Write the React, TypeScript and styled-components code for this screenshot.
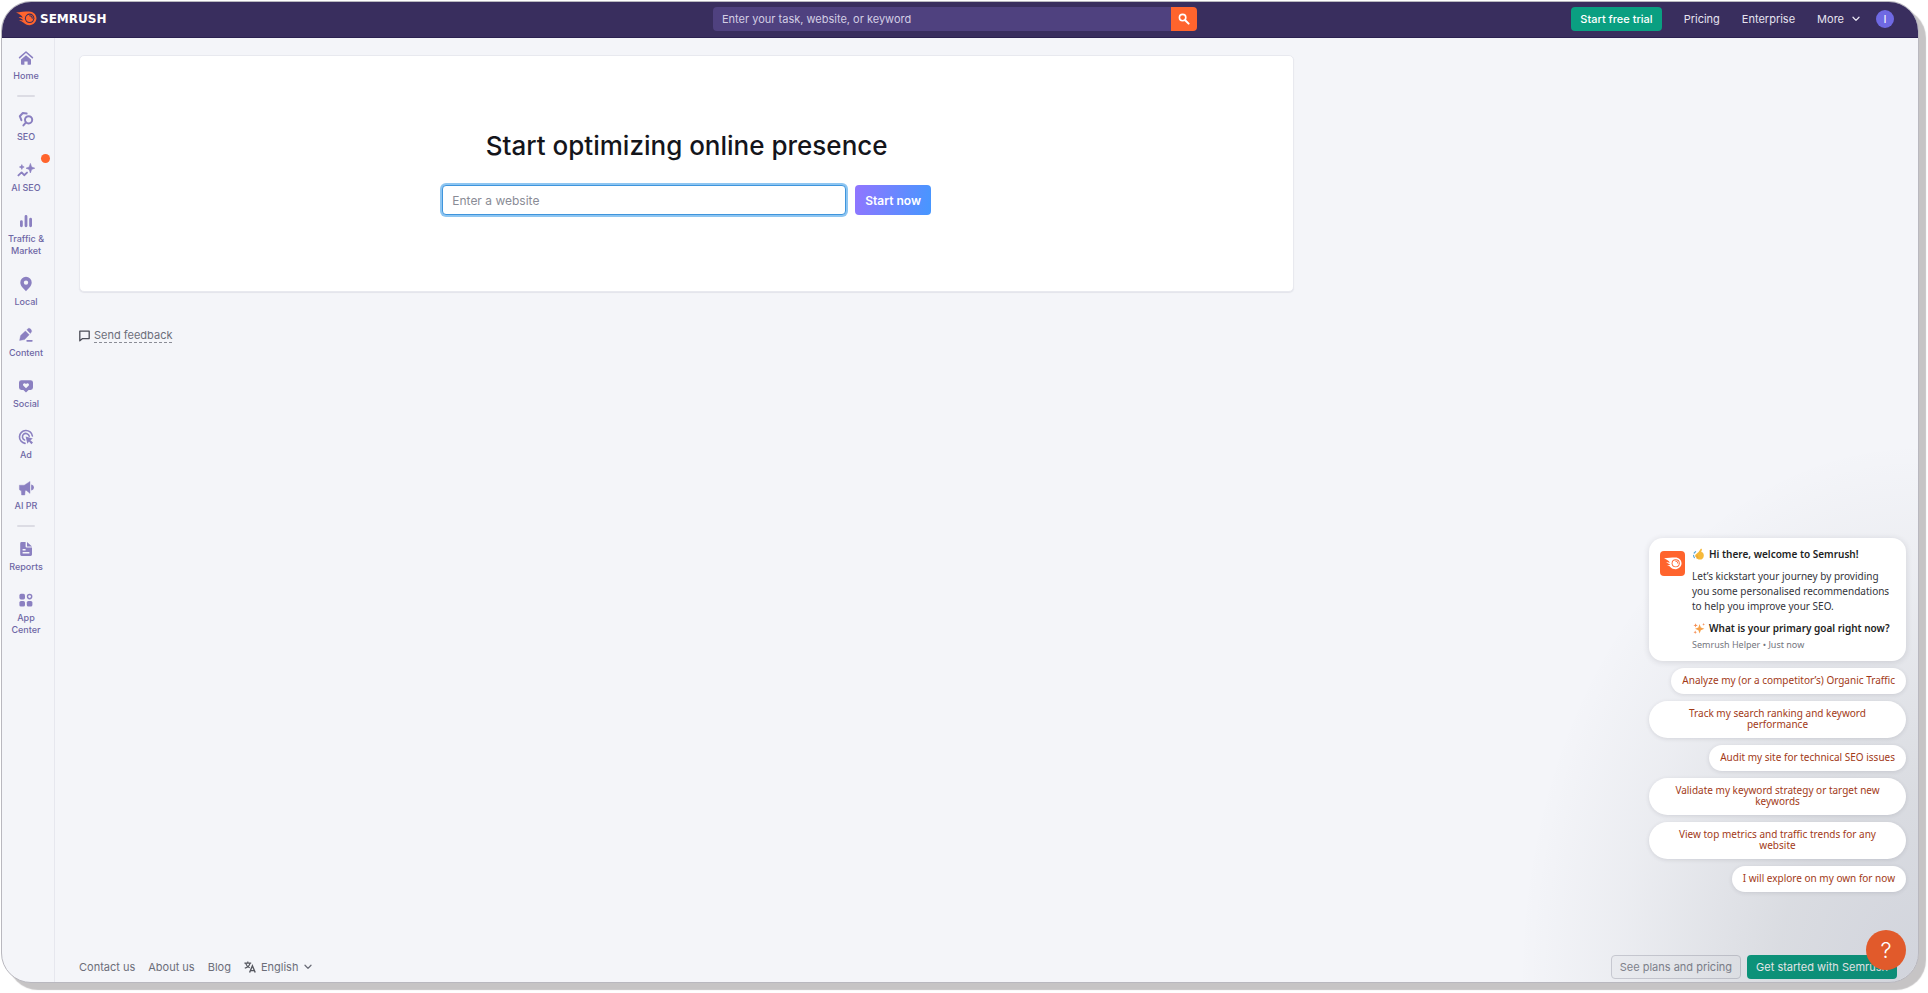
import React from 'react';
import styled, { createGlobalStyle } from 'styled-components';

const GlobalStyle = createGlobalStyle`
  * { box-sizing: border-box; }
  body {
    margin: 0;
    background: #fff;
    font-family: Inter, 'Liberation Sans', sans-serif;
    font-size: 11px;
    color: #6c6e79;
  }
  button, input, select { font: inherit; color: inherit; }
  button { cursor: pointer; }
  a { color: inherit; text-decoration: none; }
`;

const Page = styled.div`
  min-height: 100vh;
  padding: 1px 9px 10px 1px;
  display: flex;
`;

const AppWindow = styled.div`
  position: relative;
  flex: 1;
  display: flex;
  flex-direction: column;
  border: 1px solid #b9b8bf;
  border-radius: 30px;
  background: #f4f5f9;
  box-shadow: 7px 7px 1px #c6c4c5;
  overflow: hidden;
`;

/* ---------- header ---------- */

const Header = styled.header`
  height: 36px;
  flex: none;
  display: grid;
  grid-template-columns: 1fr 484px 1fr;
  align-items: center;
  padding: 0 24px 2px 14px;
  background: #392e5e;
  border-bottom: 1px solid #2b2150;
  color: #e6e3f0;
`;

const Brand = styled.a`
  display: flex;
  align-items: center;
  gap: 3px;
  color: #fff;
  font-family: 'DejaVu Sans', sans-serif;
  font-weight: 700;
  font-size: 12px;
  line-height: 16px;
`;

const SearchForm = styled.form`
  display: flex;
  height: 24px;
  border-radius: 4px;
  overflow: hidden;
`;

const SearchInput = styled.input`
  flex: 1;
  min-width: 0;
  border: 0;
  outline: 0;
  padding: 0 9px;
  background: #4f417f;
  &::placeholder { color: #d3cee4; opacity: 1; }
`;

const SearchButton = styled.button`
  width: 26px;
  border: 0;
  padding: 0;
  display: flex;
  align-items: center;
  justify-content: center;
  background: #ff642d;
`;

const HeaderNav = styled.nav`
  display: flex;
  align-items: center;
  justify-content: flex-end;
  gap: 22px;
`;

const MoreButton = styled.button`
  display: flex;
  align-items: center;
  gap: 8px;
  border: 0;
  padding: 0;
  background: none;
`;

const Avatar = styled.button`
  width: 18px;
  height: 18px;
  margin-left: -6px;
  border: 0;
  padding: 0;
  border-radius: 50%;
  background: #6f69e3;
  color: #fff;
  line-height: 18px;
`;

const Button = styled.button<{ $tone: 'green' | 'gray'; $weight?: number }>`
  height: 24px;
  padding: 0 8px;
  border: 1px solid ${p => (p.$tone === 'gray' ? '#cdced6' : 'transparent')};
  border-radius: 4px;
  background: ${p => ({ green: '#0a9f81', gray: '#f1f2f6' })[p.$tone]};
  background-clip: border-box;
  color: ${p => (p.$tone === 'gray' ? '#83858f' : '#fff')};
  font-weight: ${p => p.$weight ?? 400};
  line-height: 16px;
  white-space: nowrap;
`;

/* ---------- body ---------- */

const Body = styled.div`
  flex: 1;
  display: flex;
`;

const Sidebar = styled.nav`
  width: 53px;
  flex: none;
  border-right: 1px solid #e6e7ee;
  padding: 2px 4px 0 0;
  display: flex;
  flex-direction: column;
  align-items: center;
`;

const SideItem = styled.a`
  position: relative;
  width: 100%;
  padding: 10px 0 9px;
  display: flex;
  flex-direction: column;
  align-items: center;
  gap: 4px;
  text-align: center;
  color: #6e67a5;
  font-size: 9px;
  font-weight: 500;
  line-height: 12px;
  white-space: pre-line;
  svg { color: #8b80c1; display: block; }
`;

const Divider = styled.hr`
  width: 18px;
  height: 2px;
  margin: 4px 0;
  border: 0;
  border-radius: 1px;
  background: #dcdce4;
`;

const NewDot = styled.span`
  position: absolute;
  top: 2px;
  right: 0;
  width: 9px;
  height: 9px;
  border-radius: 50%;
  background: #ff642d;
`;

const Main = styled.main`
  flex: 1;
  min-width: 0;
  display: flex;
  flex-direction: column;
  justify-content: space-between;
  padding: 17px 16px 3px 24px;
`;

const Content = styled.div`
  display: grid;
  grid-template-columns: 2fr 1fr;
`;

const Card = styled.section`
  height: 237px;
  display: flex;
  flex-direction: column;
  align-items: center;
  padding-top: 72px;
  border: 1px solid #e8e9ef;
  border-radius: 5px;
  background: #fff;
  box-shadow: 0 1px 1px #e3e4ea;
`;

const Title = styled.h1`
  margin: 0 0 21px;
  font-size: 26px;
  line-height: 36px;
  font-weight: 500;
  color: #14151b;
`;

const SiteForm = styled.form`
  display: flex;
  gap: 9px;
`;

const SiteInput = styled.input`
  width: 404px;
  height: 30px;
  padding: 0 9px;
  border: 1px solid #3f95dc;
  border-radius: 4px;
  outline: 0;
  background: #fff;
  box-shadow: 0 0 0 2px #8ec6f2;
  font-size: 12px;
  &::placeholder { color: #8a8c96; opacity: 1; }
`;

const StartButton = styled.button`
  height: 30px;
  padding: 0 10px;
  border: 0;
  border-radius: 4px;
  background: linear-gradient(100deg, #9175ff, #4697ff);
  color: #fff;
  font-size: 12px;
  font-weight: 600;
`;

const Feedback = styled.a`
  display: inline-flex;
  align-items: center;
  gap: 4px;
  margin-top: 36px;
  span { border-bottom: 1px dashed #8a8c96; line-height: 14px; }
`;

const Footer = styled.footer`
  display: flex;
  align-items: center;
  justify-content: space-between;
  padding-right: 5px;
`;

const FooterGroup = styled.div<{ $gap: number }>`
  display: flex;
  align-items: center;
  gap: ${p => p.$gap}px;
`;

const Language = styled.label`
  display: flex;
  align-items: center;
  gap: 5px;
  select {
    appearance: none;
    border: 0;
    outline: 0;
    padding: 0;
    background: none;
    width: 38px;
  }
`;

/* ---------- assistant ---------- */

const Haze = styled.div`
  position: absolute;
  right: 0;
  bottom: 0;
  width: 400px;
  height: 540px;
  pointer-events: none;
  background: radial-gradient(farthest-side at bottom right, rgba(29, 39, 70, 0.16) 0%, rgba(29, 39, 54, 0.12) 35%, rgba(29, 39, 54, 0.04) 75%, rgba(29, 39, 54, 0) 100%);
`;

const Assistant = styled.aside`
  position: absolute;
  right: 12px;
  bottom: 90px;
  width: 257px;
  display: flex;
  flex-direction: column;
  align-items: flex-end;
  gap: 7px;
  font-family: 'Noto Sans', 'Open Sans', sans-serif;
  font-size: 10px;
`;

const Message = styled.article`
  width: 100%;
  display: flex;
  gap: 7px;
  padding: 9px 8px 9px 11px;
  border-radius: 14px;
  background: #fff;
  box-shadow: 0 1px 6px rgba(40, 44, 60, 0.14);
  color: #33343a;
  line-height: 15px;
`;

const HelperIcon = styled.span`
  flex: none;
  width: 25px;
  height: 25px;
  margin-top: 4px;
  border-radius: 4px;
  background: #ff642d;
  display: flex;
  align-items: center;
  justify-content: center;
`;

const MessageBody = styled.div`
  white-space: nowrap;
  p { margin: 0 0 7px; }
  small { display: block; font-size: 9px; line-height: 14px; color: #74767e; }
`;

const Strong = styled.p`
  && { display: flex; align-items: center; gap: 3px; font-weight: 600; color: #1d1e23; }
  &&:nth-of-type(3) { margin-bottom: 2px; }
`;

const Choice = styled.button`
  max-width: 100%;
  padding: 7px 11px 8px;
  border: 0;
  border-radius: 19px;
  background: #fff;
  box-shadow: 0 1px 4px rgba(40, 44, 60, 0.12);
  color: #a23a17;
  line-height: 11px;
  text-align: center;
`;

const HelpButton = styled.button`
  position: absolute;
  right: 12px;
  bottom: 12px;
  width: 40px;
  height: 40px;
  border: 0;
  padding: 0;
  border-radius: 50%;
  background: #e15a2b;
  color: #fff;
  font-size: 22px;
  font-weight: 300;
  line-height: 40px;
`;

/* ---------- drawings ---------- */

const Comet = ({ size, flame, hole }: { size: number; flame: string; hole: string }) => (
  <svg width={size} height={size * 0.7} viewBox="0 0 40 28" aria-hidden="true">
    <path fill={flame} d="M0 3C8 2 17 1 25 1c8 0 14 6 14 13s-6 13-13 13c-5 0-9-2-12-5-2-2-5-3-8-4 3-1 6 0 8 0-2-3-5-4-9-6 3-1 5 0 8 1C11 8 6 6 0 3z" />
    <circle cx="26" cy="14" r="9" fill={hole} />
    <circle cx="26" cy="14" r="7" fill={flame} />
    <path d="M26 9a5 5 0 0 1 5 5" fill="none" stroke={hole} strokeWidth="2" strokeLinecap="round" />
  </svg>
);

const Chevron = () => (
  <svg width="8" height="6" viewBox="0 0 8 6" fill="none" stroke="currentColor" strokeWidth="1.3" strokeLinecap="round" strokeLinejoin="round" aria-hidden="true">
    <path d="M1 1.2 4 4.4 7 1.2" />
  </svg>
);

const icons: Record<string, React.ReactNode> = {
  home: <><path d="M1.6 7.6 8 2l6.4 5.6" fill="none" stroke="currentColor" strokeWidth="1.6" strokeLinecap="round" strokeLinejoin="round" /><path d="M8 5.2 3 9.6V14a.8.8 0 0 0 .8.8h2.6v-3.4h3.2v3.4h2.6A.8.8 0 0 0 13 14V9.6z" fill="currentColor" /></>,
  seo: <g fill="none" stroke="currentColor" strokeWidth="2"><circle cx="10.6" cy="8.8" r="3.6" /><path d="m8 11.4-2.6 3" strokeLinecap="round" /><path d="M8.6 2.6 4.8 2 1.8 5.2l1.6 4" strokeLinejoin="round" strokeLinecap="round" /></g>,
  ai: <><path d="M12.4 1.4 13.6 5l3.2 1.2-3.2 1.2-1.2 3.6-1.2-3.6L8 6.2 11.2 5zM3.8 2.6l.7 1.7 1.7.7-1.7.7-.7 1.7-.7-1.7L1.4 5l1.7-.7z" fill="currentColor" stroke="currentColor" strokeWidth=".6" /><path d="m.4 13.4 3.2-3 2.6 2.8 2.8-2.6" fill="none" stroke="currentColor" strokeWidth="1.9" strokeLinecap="round" strokeLinejoin="round" /></>,
  traffic: <g stroke="currentColor" strokeWidth="2.8" strokeLinecap="round"><path d="M3.4 8.6v4.2M8 3.4v9.4M12.6 6.2v6.6" /></g>,
  local: <path fillRule="evenodd" fill="currentColor" d="M8 .8a5.700 5.700 0 0 0-5.700 5.700c0 3.800 3.400 6.200 5.700 8.700 2.300-2.500 5.700-4.900 5.700-8.700A5.700 5.700 0 0 0 8 .8zM8 4.400a2.200 2.200 0 1 1 0 4.400 2.200 2.200 0 0 1 0-4.400z" />,
  content: <><path d="M1.600 13.400 2.600 8.600 7.400 4l3.800 3.800-4.600 4.800zM8.800 2.800 10.400 1.400c1.400-.6 3.600 1.600 3.200 3.200L12.400 6.400z" fill="currentColor" stroke="currentColor" strokeWidth=".4" /><path d="M9.200 13.800h4.600" stroke="currentColor" strokeWidth="1.8" strokeLinecap="round" /></>,
  social: <><path d="M3.400 2.200h9.200A2.400 2.400 0 0 1 15 4.600v5a2.400 2.400 0 0 1-2.400 2.400h-2L8 14.600 5.400 12h-2A2.400 2.400 0 0 1 1 9.600v-5a2.400 2.400 0 0 1 2.400-2.400z" fill="currentColor" /><path d="M8 10.200 5.200 7.400c-.9-1.300 1.200-3.400 2.800-1.500 1.600-1.900 3.700.2 2.800 1.500z" fill="#f4f5f9" /></>,
  ad: <><g fill="none" stroke="currentColor" strokeWidth="1.600" strokeLinecap="round"><path d="M14.400 7A6.500 6.500 0 1 0 7 14.400" /><path d="M11.200 7.200A3.400 3.400 0 1 0 6.600 11" /></g><path d="m7.600 7.600 7.200 2-2.400 1.600 2.600 2.400-1.600 1.600-2.400-2.600-1.600 2.200z" fill="currentColor" /></>,
  pr: <><path d="M1.400 5.200h4.800L12 1.400v12l-3.600-3H7.200L6.800 15H3.600l-.4-4.600H2.600A1.300 1.300 0 0 1 1.400 9z" fill="currentColor" strokeLinejoin="round" stroke="currentColor" strokeWidth=".4" /><path d="M13.800 5.400a2.200 2.200 0 0 1 0 4.200z" fill="currentColor" stroke="currentColor" strokeWidth="1.200" /></>,
  reports: <path fillRule="evenodd" fill="currentColor" d="M3.600 1h4v4.600a1 1 0 0 0 1 1H14v7A1.400 1.400 0 0 1 12.600 15H3.600A1.400 1.400 0 0 1 2.200 13.600V2.400A1.400 1.400 0 0 1 3.600 1zM9 1l5 4.600H9zM4.600 8v1.400h3V8zM4.600 11v1.400h6.800V11z" />,
  apps: <><g fill="currentColor"><rect x="1.400" y="1.800" width="5.600" height="5.600" rx="1.600" /><rect x="1.400" y="9" width="5.600" height="5.600" rx="1.600" /><rect x="8.800" y="9" width="5.600" height="5.600" rx="1.600" /></g><circle cx="11.600" cy="4.600" r="2.100" fill="none" stroke="currentColor" strokeWidth="1.400" /></>,
};

const SideIcon = ({ name }: { name: string }) => (
  <svg width="16" height="16" viewBox="0 0 16 16" overflow="visible" aria-hidden="true">{icons[name]}</svg>
);

const Wave = () => (
  <svg width="14" height="13" viewBox="0 0 14 13" aria-hidden="true">
    <path d="M3.400 6.800 6.600 4 8.800.8c.8-.4 1.300.2 1.100 1L9.200 4c1.600.2 2.600 1.500 2.600 3.400 0 2.600-1.600 4.200-4 4.200-1.600 0-2.900-.6-3.700-1.800l.5-.8L3 8.200z" fill="#f6b93a" />
    <path d="M3.600 8.400 6 8M4.400 10l2-.6" stroke="#e0952a" strokeWidth=".6" />
    <path d="M3.600 3.600 2.200 5M1.600 7.400c0 1 .3 1.600.8 2.200" stroke="#59a7d8" strokeWidth="1.200" fill="none" strokeLinecap="round" />
  </svg>
);

const Sparkles = () => (
  <svg width="14" height="13" viewBox="0 0 14 13" aria-hidden="true">
    <path d="M7.600 2 8.800 5.400 12.400 6.800 8.800 8.200 7.600 11.600 6.400 8.200 3 6.800 6.400 5.400z" fill="#f7a24b" />
    <path d="m3.600 1.200.6 1.600 1.600.6-1.600.6-.6 1.600L3 4l-1.600-.6L3 2.800zM3.200 8.600l.5 1.200 1.200.5-1.200.5-.5 1.200-.5-1.200-1.200-.5 1.200-.5zM11.600 1l.4 1 1 .4-1 .4-.4 1-.4-1-1-.4 1-.4z" fill="#f58f56" />
  </svg>
);

/* ---------- data ---------- */

const sections = [
  [{ icon: 'home', label: 'Home' }],
  [
    { icon: 'seo', label: 'SEO' },
    { icon: 'ai', label: 'AI SEO', isNew: true },
    { icon: 'traffic', label: 'Traffic &\nMarket' },
    { icon: 'local', label: 'Local' },
    { icon: 'content', label: 'Content' },
    { icon: 'social', label: 'Social' },
    { icon: 'ad', label: 'Ad' },
    { icon: 'pr', label: 'AI PR' },
  ],
  [
    { icon: 'reports', label: 'Reports' },
    { icon: 'apps', label: 'App\nCenter' },
  ],
] as { icon: string; label: string; isNew?: boolean }[][];

const choices = [
  'Analyze my (or a competitor’s) Organic Traffic',
  'Track my search ranking and keyword performance',
  'Audit my site for technical SEO issues',
  'Validate my keyword strategy or target new keywords',
  'View top metrics and traffic trends for any website',
  'I will explore on my own for now',
];

export default function App() {
  return (
    <Page>
      <GlobalStyle />
      <AppWindow>
        <Header>
          <Brand href="#"><Comet size={21} flame="#ff642d" hole="#392e5e" />SEMRUSH</Brand>
          <SearchForm onSubmit={e => e.preventDefault()}>
            <SearchInput aria-label="Search" placeholder="Enter your task, website, or keyword" />
            <SearchButton aria-label="Search">
              <svg width="12" height="12" viewBox="0 0 12 12" fill="none" stroke="#fff" aria-hidden="true">
                <circle cx="4.600" cy="4.600" r="3.200" strokeWidth="1.600" />
                <path d="m7.200 7.200 3.400 3.400" strokeWidth="2" strokeLinecap="round" />
              </svg>
            </SearchButton>
          </SearchForm>
          <HeaderNav>
            <Button $tone="green" $weight={500}>Start free trial</Button>
            <a href="#">Pricing</a>
            <a href="#">Enterprise</a>
            <MoreButton>More <Chevron /></MoreButton>
            <Avatar>I</Avatar>
          </HeaderNav>
        </Header>
        <Body>
          <Sidebar>
            {sections.map((items, i) => (
              <React.Fragment key={i}>
                {i > 0 && <Divider />}
                {items.map(item => (
                  <SideItem href="#" key={item.label}>
                    <SideIcon name={item.icon} />
                    {item.label}
                    {item.isNew && <NewDot />}
                  </SideItem>
                ))}
              </React.Fragment>
            ))}
          </Sidebar>
          <Main>
            <Content>
              <div>
                <Card>
                  <Title>Start optimizing online presence</Title>
                  <SiteForm onSubmit={e => e.preventDefault()}>
                    <SiteInput aria-label="Website" placeholder="Enter a website" />
                    <StartButton>Start now</StartButton>
                  </SiteForm>
                </Card>
                <Feedback href="#">
                  <svg width="11" height="12" viewBox="0 0 11 12" fill="none" stroke="#4b4d57" strokeWidth="1.300" aria-hidden="true">
                    <path d="M.8 1.200h9.400v7.400H3.600L.8 10.800z" strokeLinejoin="round" />
                  </svg>
                  <span>Send feedback</span>
                </Feedback>
              </div>
            </Content>
            <Footer>
              <FooterGroup $gap={13}>
                <a href="#">Contact us</a>
                <a href="#">About us</a>
                <a href="#">Blog</a>
                <Language>
                  <svg width="12" height="12" viewBox="0 0 12 12" fill="none" stroke="#55575f" strokeWidth="1.200" aria-hidden="true">
                    <path d="M.4 2.200h6.800M3.800.6v1.600M6 2.400C5.400 5 3 6.600.8 7.200M1.800 2.600c.6 2 2.200 3.600 4 4.200" />
                    <path d="m5.600 11.600 2.800-6.800 2.800 6.800M6.600 9.600h3.600" strokeWidth="1.400" />
                  </svg>
                  <select aria-label="Language" defaultValue="English"><option>English</option></select>
                  <Chevron />
                </Language>
              </FooterGroup>
              <FooterGroup $gap={6}>
                <Button $tone="gray">See plans and pricing</Button>
                <Button $tone="green">Get started with Semrush</Button>
              </FooterGroup>
            </Footer>
          </Main>
        </Body>
        <Haze />
        <Assistant>
          <Message>
            <HelperIcon><Comet size={18} flame="#fff" hole="#ff642d" /></HelperIcon>
            <MessageBody>
              <Strong><Wave /> Hi there, welcome to Semrush!</Strong>
              <p>Let’s kickstart your journey by providing<br />you some personalised recommendations<br />to help you improve your SEO.</p>
              <Strong><Sparkles /> What is your primary goal right now?</Strong>
              <small>Semrush Helper • Just now</small>
            </MessageBody>
          </Message>
          {choices.map(text => <Choice key={text}>{text}</Choice>)}
        </Assistant>
        <HelpButton aria-label="Help">?</HelpButton>
      </AppWindow>
    </Page>
  );
}
